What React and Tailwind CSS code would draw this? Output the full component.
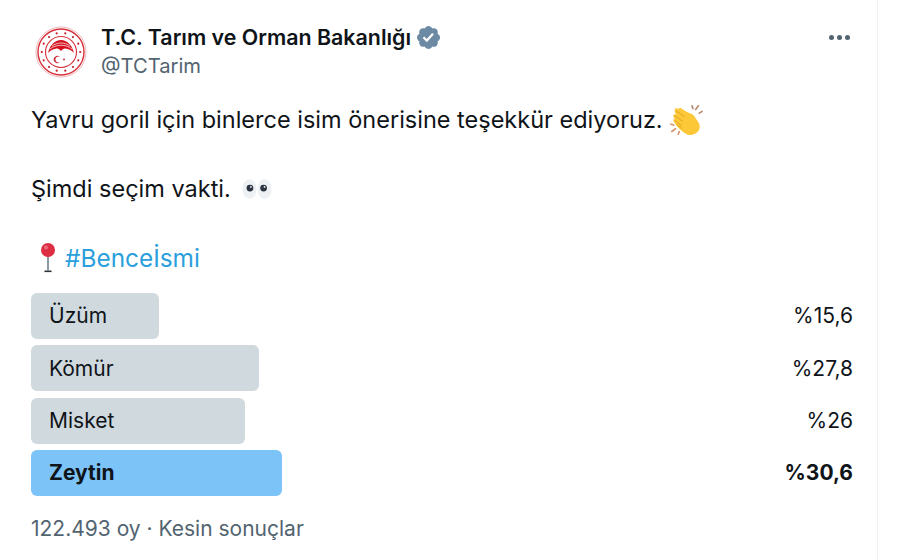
import React from 'react';

const polls = [
  { label: 'Üzüm', pct: '%15,6', width: 'w-[128px]' },
  { label: 'Kömür', pct: '%27,8', width: 'w-[228px]' },
  { label: 'Misket', pct: '%26', width: 'w-[214px]' },
  { label: 'Zeytin', pct: '%30,6', width: 'w-[251px]', winner: true },
];

const Logo = () => {
  const dots = Array.from({ length: 14 }, (_, i) => (i * Math.PI * 2) / 14);
  return (
    <svg width="52" height="52" viewBox="0 0 52 52" className="shrink-0">
      <circle cx="26" cy="26" r="25" fill="#fff" stroke="#eeb9bc" strokeWidth="1" />
      <circle cx="26" cy="26" r="23" fill="none" stroke="#d6303a" strokeWidth="1.4" />
      <circle cx="26" cy="26" r="15.5" fill="none" stroke="#d6303a" strokeWidth="1.1" />
      {dots.map((a, i) => (
        <circle key={i} cx={26 + 19.2 * Math.cos(a)} cy={26 + 19.2 * Math.sin(a)} r="1.1" fill="#c9202c" />
      ))}
      <path d="M13 27c2-8 7-13 13-13s11 5 13 13c-3-3-5-4-7-4-3-1-4 0-6 2-2-2-3-3-6-2-2 0-4 1-7 4z" fill="#d4111e" />
      <path d="M17 20c5-4 13-4 18 0M15 23c6-5 16-5 22 0" fill="none" stroke="#fff" strokeWidth="0.7" />
      <path d="M25 31a3.6 3.6 0 1 0 0 5 3 3 0 1 1 0-5z" fill="#c9202c" />
      <circle cx="29" cy="33.5" r="0.9" fill="#c9202c" />
    </svg>
  );
};

const Verified = () => (
  <svg viewBox="0 0 22 22" className="w-[27px] h-[27px] ml-[4px] shrink-0">
    <path
      fill="#6d8aa5"
      d="M20.396 11c-.018-.646-.215-1.275-.57-1.816-.354-.54-.852-.972-1.438-1.246.223-.607.27-1.264.14-1.897-.131-.634-.437-1.218-.882-1.687-.47-.445-1.053-.75-1.687-.882-.633-.13-1.29-.083-1.897.14-.273-.587-.704-1.086-1.245-1.44S11.647 1.62 11 1.604c-.646.017-1.273.213-1.813.568s-.969.854-1.24 1.44c-.608-.223-1.267-.272-1.902-.14-.635.13-1.22.436-1.69.882-.445.47-.749 1.055-.878 1.688-.13.633-.08 1.29.144 1.896-.587.274-1.087.705-1.443 1.245-.356.54-.555 1.17-.574 1.817.02.647.218 1.276.574 1.817.356.54.856.972 1.443 1.245-.224.606-.274 1.263-.144 1.896.13.634.433 1.218.877 1.688.47.443 1.054.747 1.687.878.633.132 1.29.084 1.897-.136.274.586.705 1.084 1.246 1.439.54.354 1.17.551 1.816.569.647-.016 1.276-.213 1.817-.567s.972-.854 1.245-1.44c.604.239 1.266.296 1.903.164.636-.132 1.22-.447 1.68-.907.46-.46.776-1.044.908-1.681s.075-1.299-.165-1.903c.586-.274 1.084-.705 1.439-1.246.354-.54.551-1.17.569-1.816z"
    />
    <path fill="#fff" d="M9.662 14.85l-3.429-3.428 1.293-1.302 2.072 2.072 4.4-4.794 1.347 1.246z" />
  </svg>
);

const Clap = () => (
  <svg viewBox="0 0 36 36" className="w-[33px] h-[33px] ml-[7px] shrink-0">
    <g fill="none" strokeLinecap="round" strokeWidth="1.8">
      <path d="M24 2l1 3M31 2l-3 4M35 8l-3 2" stroke="#b78a6e" />
      <path d="M1 22l3 1M2 30l4-3M9 33l1-3" stroke="#d8936b" />
    </g>
    <path
      d="M5 5c2-1 3 0 5 1l-1-1c1-1 3-1 5 1l5 3c3 1 6 2 8 5l4 6c3 5 1 10-3 12-4 3-9 2-13-1-4-3-8-7-11-12-1-2 1-3 2-2-2-2-3-4-2-5 1-1 2-1 3 0-1-2-2-3-2-4 0-2 2-2 3-1-2-1-4-2-3-2z"
      fill="#fcc838"
    />
    <path d="M6 7l10 7M4 12l10 7M4 17l9 7M7 22l6 5" stroke="#e0a21e" strokeWidth="1" fill="none" />
  </svg>
);

const Eyes = () => (
  <svg viewBox="0 0 34 24" className="w-[32px] h-[24px] ml-[10px] shrink-0">
    <ellipse cx="9" cy="12" rx="7.5" ry="10.5" fill="#eef1f4" />
    <ellipse cx="25" cy="12" rx="7.5" ry="10.5" fill="#eef1f4" />
    <circle cx="9.5" cy="11" r="3.6" fill="#2b3440" />
    <circle cx="24" cy="11" r="3.6" fill="#2b3440" />
    <circle cx="10.5" cy="9.8" r="0.9" fill="#fff" />
    <circle cx="25" cy="9.8" r="0.9" fill="#fff" />
  </svg>
);

const Pin = () => (
  <svg viewBox="0 0 18 32" className="w-[18px] h-[32px] ml-[8px] mr-[8px] shrink-0">
    <rect x="8" y="13" width="2" height="15" fill="#8d9aa5" />
    <rect x="5.5" y="28.5" width="7" height="1.6" fill="#292f33" />
    <circle cx="9" cy="8" r="7" fill="#dd2e44" />
    <circle cx="7" cy="5.5" r="2" fill="#ea6b7c" />
  </svg>
);

export default function App() {
  return (
    <div className="w-[900px] h-[560px] bg-white overflow-hidden font-['Inter','Noto_Sans',sans-serif] text-[#0f1419]">
      <div className="w-[878px] h-[560px] border-r border-[#eff3f4] pl-[31px] pr-[24px]">
        {/* Header */}
        <div className="flex items-start h-[81px] pt-[26px]">
          <div className="ml-[4px]">
            <Logo />
          </div>
          <div className="ml-[14px] -mt-[1px] flex-1">
            <div className="flex items-center h-[24px]">
              <span className="text-[21.4px] leading-[24px] font-semibold">T.C. Tarım ve Orman Bakanlığı</span>
              <Verified />
            </div>
            <div className="text-[20.2px] leading-[28px] mt-[3px] text-[#536471]">@TCTarim</div>
          </div>
          <div className="flex gap-[3px] mt-[9px] mr-[3px]">
            <span className="w-[5px] h-[5px] rounded-full bg-[#536471]" />
            <span className="w-[5px] h-[5px] rounded-full bg-[#536471]" />
            <span className="w-[5px] h-[5px] rounded-full bg-[#536471]" />
          </div>
        </div>

        {/* Tweet text */}
        <div className="text-[23.5px] leading-[34px] mt-[22px]">
          <div className="flex items-center h-[34px]">
            Yavru goril için binlerce isim önerisine teşekkür ediyoruz.
            <Clap />
          </div>
          <div className="flex items-center h-[34px] mt-[35px]">
            Şimdi seçim vakti.
            <Eyes />
          </div>
          <div className="flex items-center h-[34px] mt-[35px] text-[24.4px] text-[#2b9fdc]">
            <Pin />
            #Benceİsmi
          </div>
        </div>

        {/* Poll */}
        <div className="flex flex-col gap-[6.3px] mt-[18px]">
          {polls.map((p) => (
            <div key={p.label} className="flex items-center justify-between h-[46px]">
              <div
                className={`${p.width} h-[46px] rounded-[6px] flex items-center pl-[18px] text-[21px] ${
                  p.winner ? 'bg-[#7cc3f8] font-bold' : 'bg-[#cfd9de]'
                }`}
              >
                {p.label}
              </div>
              <span className={`text-[21px] ${p.winner ? 'font-bold' : ''}`}>{p.pct}</span>
            </div>
          ))}
        </div>

        <div className="text-[21px] leading-[28px] mt-[19px] text-[#536471]">122.493 oy · Kesin sonuçlar</div>
      </div>
    </div>
  );
}
